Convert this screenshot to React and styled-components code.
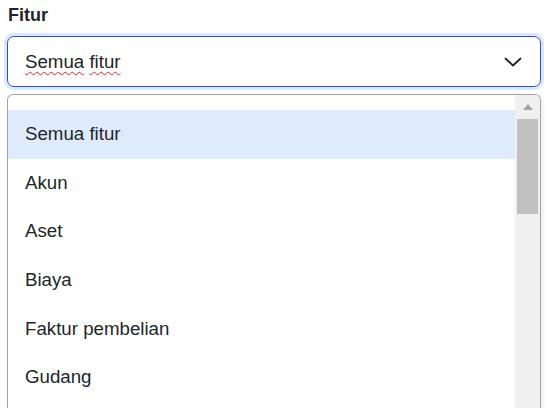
import React from "react";
import styled, { createGlobalStyle } from "styled-components";

const GlobalStyle = createGlobalStyle`
  html, body {
    margin: 0;
    padding: 0;
    background: #ffffff;
    overflow: hidden;
  }
  body {
    font-family: "Liberation Sans", Arial, sans-serif;
    color: #212529;
  }
`;

const options = [
  "Semua fitur",
  "Akun",
  "Aset",
  "Biaya",
  "Faktur pembelian",
  "Gudang",
];

const Page = styled.div`
  width: 534px;
  padding: 5px 0 0 7px;
  display: flex;
  flex-direction: column;
`;

const Label = styled.label`
  font-size: 18px;
  font-weight: 700;
  line-height: 21px;
  padding-left: 1px;
  margin-bottom: 10px;
`;

const SelectBox = styled.div`
  height: 51px;
  flex-shrink: 0;
  box-sizing: border-box;
  border: 1px solid #2a50d6;
  border-radius: 7px;
  box-shadow: 0 0 0 3px #dbe7fb;
  display: flex;
  align-items: center;
  justify-content: space-between;
  padding: 0 18px 0 17px;
  font-size: 18.7px;
`;

const Misspelled = styled.span`
  text-decoration: underline wavy #e02020;
  text-decoration-thickness: 1px;
  text-underline-offset: 3px;
`;

const Chevron = () => (
  <svg width="18" height="12" viewBox="0 0 18 12" fill="none">
    <path d="M1.5 2.5 L9 9.5 L16.5 2.5" stroke="#222" strokeWidth="1.8" strokeLinecap="round" strokeLinejoin="round" />
  </svg>
);

const ListBox = styled.div`
  margin-top: 7px;
  height: 330px;
  flex-shrink: 0;
  box-sizing: border-box;
  border: 1px solid #a4a4a4;
  border-bottom: none;
  border-radius: 6px 6px 0 0;
  box-shadow: 2px 2px 5px rgba(0, 0, 0, 0.08);
  display: flex;
  overflow: hidden;
`;

const Items = styled.div`
  flex: 1;
  padding-top: 15px;
  display: flex;
  flex-direction: column;
`;

const Item = styled.div`
  height: 48.6px;
  flex-shrink: 0;
  display: flex;
  align-items: center;
  padding-left: 17px;
  font-size: 18.7px;
  background: ${(p) => (p.$active ? "#dfebfd" : "transparent")};
`;

const ScrollTrack = styled.div`
  width: 25px;
  background: #f0f0f0;
  display: flex;
  flex-direction: column;
  align-items: center;
`;

const ArrowUp = styled.div`
  height: 24px;
  display: flex;
  align-items: center;
  justify-content: center;
`;

const Thumb = styled.div`
  width: 21px;
  height: 95px;
  background: #c1c1c1;
`;

export default function App() {
  return (
    <>
      <GlobalStyle />
      <Page>
        <Label>Fitur</Label>
        <SelectBox>
          <span>
            <Misspelled>Semua</Misspelled> <Misspelled>fitur</Misspelled>
          </span>
          <Chevron />
        </SelectBox>
        <ListBox>
          <Items>
            {options.map((o, i) => (
              <Item key={o} $active={i === 0}>
                {o}
              </Item>
            ))}
          </Items>
          <ScrollTrack>
            <ArrowUp>
              <svg width="10" height="6" viewBox="0 0 10 6">
                <polygon points="5,0 10,6 0,6" fill="#a3a3a3" />
              </svg>
            </ArrowUp>
            <Thumb />
          </ScrollTrack>
        </ListBox>
      </Page>
    </>
  );
}
